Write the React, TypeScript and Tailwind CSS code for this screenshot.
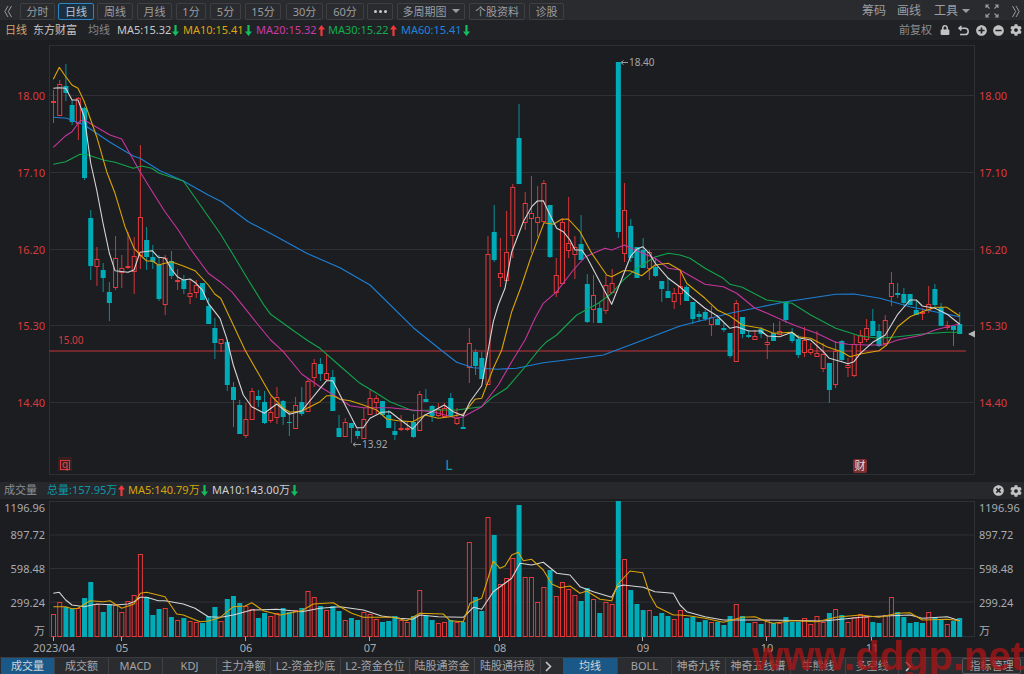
import React from "react";
import { FaCog, FaLock, FaPlusCircle, FaMinusCircle, FaTimesCircle } from "react-icons/fa";

const BG = "#1c1d21";
const RED = "#e5393b";
const CY = "#00abb8";

// kind (1 up/red hollow, 0 down/cyan), body top, body bottom, high, low (page pixels)
const K: number[][] = [
  [1,101,102,90,123],[1,84,115,80,115],[0,86,93,64,101],[0,105,122,100,125],[1,98,123,97,140],[0,108,178,107,180],
  [0,218,266,210,280],[1,259,266,247,286],[0,270,278,263,292],[0,292,303,282,321],[1,258,287,236,290],[1,268,272,255,288],
  [1,266,267,232,269],[1,256,271,237,294],[1,217,255,145,269],[0,240,257,227,270],[0,257,262,245,269],[0,265,299,255,301],
  [1,258,304,255,315],[0,261,276,251,279],[1,280,281,269,290],[0,280,289,275,294],[1,293,296,280,304],[1,285,292,280,298],
  [0,283,300,283,300],[0,306,324,298,324],[0,328,343,318,359],[1,339,343,339,352],[0,342,385,340,391],[0,387,400,382,427],
  [0,405,434,400,434],[1,419,435,403,438],[1,391,419,388,420],[0,396,400,390,407],[0,402,423,391,424],[1,412,420,397,423],
  [1,397,417,387,424],[0,401,417,400,425],[0,422,423,412,436],[1,405,428,397,428],[0,402,414,387,416],[1,381,411,378,412],
  [1,363,377,359,387],[0,364,374,358,381],[1,373,379,354,381],[0,377,411,370,411],[0,428,437,415,437],
  [1,422,436,418,436],[0,423,428,423,443],[0,431,436,428,439],[1,419,438,408,438],[1,398,414,390,414],[1,398,402,395,414],
  [0,401,415,401,415],[0,415,428,410,428],[0,431,435,422,440],[1,428,429,415,431],[1,428,429,422,431],[0,422,437,414,438],
  [1,394,430,391,430],[0,399,402,389,402],[0,406,416,405,422],[1,409,415,403,417],[1,408,416,403,418],[0,398,416,393,416],
  [1,418,423,408,425],[0,427,429,415,429],[1,343,367,328,383],[0,352,366,349,375],[0,358,379,352,379],[1,254,384,236,385],
  [0,232,260,205,262],[1,273,277,238,287],[1,252,280,211,280],[1,187,235,184,258],[0,138,184,104,184],[1,203,222,192,230],
  [1,213,218,176,253],[1,217,222,186,237],[1,183,221,180,221],[0,205,257,205,258],[1,275,292,258,297],[1,222,283,218,283],
  [1,243,250,197,258],[1,247,254,236,279],[0,244,260,215,260],[0,284,322,274,323],[1,295,309,275,323],[0,308,323,302,323],
  [1,285,310,275,314],[1,283,292,269,292],[0,62,232,62,238],[1,210,253,183,262],[0,226,258,219,262],[0,247,278,247,278],
  [0,250,268,238,268],[1,252,268,250,280],[0,267,276,258,277],[0,281,289,281,302],[0,291,298,278,298],[1,293,301,288,309],
  [1,286,293,270,305],[0,287,301,285,301],[0,302,319,302,324],[0,314,317,311,322],[0,312,319,310,321],[1,317,324,306,336],
  [0,319,325,315,325],[0,328,330,323,332],[0,333,356,333,358],[1,303,361,300,361],[0,317,334,317,338],[0,335,337,330,338],
  [1,336,339,330,339],[0,329,334,327,338],[1,342,344,335,359],[0,333,341,323,341],[1,331,334,321,334],[0,302,320,301,323],
  [0,333,341,328,343],[0,339,355,335,358],[1,340,352,327,357],[1,349,352,343,355],[1,353,356,331,356],[1,354,368,343,372],
  [0,363,390,363,403],[1,351,384,341,388],[0,341,360,340,362],[1,365,367,358,377],[1,344,375,335,377],[1,335,342,330,355],
  [1,328,339,319,342],[0,321,336,309,336],[0,331,346,324,347],[1,320,343,315,343],[1,283,296,272,306],[0,293,295,283,298],
  [0,294,303,288,306],[0,294,305,294,305],[0,310,315,300,315],[1,312,313,308,320],[1,304,310,286,313],[0,289,305,284,307],
  [0,307,326,303,326],[1,325,327,321,330],[0,326,330,326,346],[0,324,334,312,334],
];

// top of each volume bar, in zoom units (page y = 480 + v / 3)
const VT = [403,367,380,387,385,355,307,372,397,372,376,395,364,344,223,352,405,387,385,410,420,415,423,427,428,408,381,423,357,347,368,378,388,415,400,408,400,385,395,390,384,334,352,378,390,378,393,
  420,415,420,397,403,417,426,423,408,420,427,408,331,408,420,430,427,420,425,427,187,350,392,110,165,313,295,235,75,292,292,367,320,270,348,305,327,345,362,323,357,400,365,372,62,238,330,373,390,390,408,400,407,418,390,
  415,412,426,420,425,425,434,408,371,408,428,427,432,420,428,428,410,425,425,415,432,408,425,400,387,405,425,410,403,410,427,428,405,352,395,410,428,426,428,397,410,420,432,423,413];
const VK = [1,1,0,0,1,0,0,1,0,0,1,1,1,1,1,0,0,0,1,0,1,0,1,1,0,0,0,1,0,0,0,1,1,0,0,1,1,0,0,1,0,1,1,0,1,0,0,
  1,0,0,1,1,1,0,0,0,1,1,0,1,0,0,1,1,0,1,0,1,0,0,1,0,1,1,1,0,1,1,1,1,0,1,1,1,1,0,0,1,0,1,1,0,1,0,0,0,1,0,0,0,1,1,
  0,0,0,0,1,0,0,0,1,0,0,1,0,1,0,1,0,0,0,1,1,1,1,0,1,0,1,1,1,1,0,0,1,1,0,0,0,0,0,1,0,0,1,0,0];

const pts = (a: number[]) => {
  const out: string[] = [];
  for (let i = 0; i < a.length; i += 2) out.push(a[i] + "," + a[i + 1]);
  return out.join(" ");
};

const MA5 = [53.3,88.3,59.3,87.7,65.7,88.3,72,100,78,100,84.3,116.7,90.7,163,96.7,190,103,223,109.3,253,115,270.7,128,272.3,134,270,140,252.3,152.3,250.7,158.3,257.3,165,258,171.3,269,177.3,276.7,183.3,280,190,279,196,283.3,202.3,290,208.3,303.3,220,318.3,226.7,338.3,233.3,365,243.3,395,251.7,406.7,264.3,413.3,276.7,404,289.3,414.3,301.7,411,320,388.3,326.7,380.7,332.7,380.7,340,395,356.7,427.7,363.3,427.7,370,418.3,381.7,412.3,390,411.7,398.3,418.3,412.7,429,425,415,431.7,411.7,444.3,405,453.3,411.7,463.3,415.7,470,401.7,481.7,385.7,493.3,321.7,498.3,305,505,288.3,511.7,252,523.3,221.7,531.7,206.7,537.3,201,543.3,200.7,550,215,556.7,228.3,563.3,231.7,570,240,575,250,581.7,250,586.7,257,611.7,304.3,623.3,275,630.7,256,636.7,249.3,642.7,246.7,649.3,253.3,655,263,668.3,278.3,680,287,692.7,298.3,705,308.3,717.3,316,730,328.3,736.7,326.7,748.7,331,761,331,767.3,336,779.7,336.7,792,332.3,798.3,337.7,810.7,340,823.3,351.7,829.3,358.3,841.7,361.7,848,363.7,854,361.7,860.3,353.3,872.7,342.3,885.3,335,897.7,314.3,910,300,916.3,300,922.3,306,935,308.3,947.3,314.3,959.7,324.3];
const MA10 = [53.3,79.3,59.3,67.3,65.7,76.7,72,85,78,88.3,84.3,101.7,96.7,136.7,106.7,171.7,115,193.3,125,226.7,134,248.3,140.3,255,146.7,261,152.7,261,158.3,265,165,263.3,171.3,261.7,183.3,266,195,270.7,208.3,285,215,294.3,220.7,298.3,233.3,325,245,350,258.3,373.3,270.7,395,283.3,408.3,290,412.3,301.7,411,320,401.7,326.7,395.7,333.3,395.7,340,399.3,350,400.7,363.3,405,376.7,410,386.7,419,398.3,420.7,412.7,421.7,425,415,438.3,418.3,450,416.7,463.3,414,475,399.3,481.7,398.3,493.3,368.3,501.7,350,511.7,311.7,521.7,285,530,260,544,222.7,553.3,224.3,561.7,219.3,568.3,219,580,231.7,591.7,253.3,606.7,275,611.7,276.7,623.3,270.7,630,270.7,641.7,275.7,655,265,668.3,263.3,680,270,686.7,283.3,705,298.3,717.3,310,730,316,742.3,325,761,328.3,773.3,333.3,792,332.3,798.3,336.7,810.7,338.3,826.7,346.7,841.7,351.7,850,356.7,860,354,879,350.7,886.7,345,897.7,326.7,910,316.7,922.3,311.7,935,307.3,946.7,307.3,959.7,316];
const MA20 = [53.3,147.3,65.7,135.7,72,131.7,80,121,84.3,120,96.7,127.3,110,135,121.7,139,140,171.7,153.3,193.3,165,211.7,178.3,230,190,248.3,208.3,273.3,220,281.7,231.7,291.7,245,308.3,258.3,325,270.7,340,283.3,351.7,301.7,374,320,386.7,340,399,350,405.7,363.3,407.7,376.7,407.7,390,407.7,412.7,410,433.3,411.7,456.7,418.3,463.3,416.7,481.7,406.7,498.3,385,511.7,361.7,525,340,535,318.3,543.3,303.3,556.7,291.7,573.3,270,585,257,593.3,253.3,605,248.3,611.7,250,624.3,245,635,250,655,258.3,668.3,268.3,680,270,705,284.3,723.3,286.7,736.7,293.3,755,308.3,767.3,313.3,786,321.7,798.3,326.7,816.7,333.3,835.7,342.3,848,344.3,866.7,345,883.3,345,897.7,340,922.3,335,935,330,947.3,326.7,959.7,324];
const MA30 = [53.3,164.3,65.7,161.7,80,154.3,88.3,155,103.3,160,115,162.3,133.3,168.3,141.7,166,151.7,168.3,159.3,173.3,183.3,181,196.7,200,220,233.3,233.3,255,248.3,280,264.3,305.7,270.7,314.3,295,331.7,308.3,341,320,348.3,340,366,360,383.3,376.7,393.3,390,401.7,412.7,410.7,433.3,410,456.7,410,481.7,406.7,493.3,396.7,506.7,388.3,526.7,365,540,348.3,546.7,341.7,556.7,335,576.7,315,598.3,303.3,611.7,293.3,623.3,280,636.7,268.3,655,257,668.3,253.3,680,255,690,258.3,705,268.3,723.3,278.3,730,284.3,742.3,287.3,766.7,300,792,303.3,810.7,315,835.7,328.3,860,336,879,338.3,897.7,336.7,922.3,334,947.3,332.3,959.7,332.3];
const MA60 = [53.3,117.3,66.7,118.3,84.3,125,110,142.3,133.3,156,140,158.3,160,170.7,183.3,181,208.3,195,221.7,201.7,248.3,221.7,276.7,236.7,306.7,253.3,340,267.7,370,285,413.3,327.7,440,349.3,456.7,362.3,473.3,367.7,496.7,369.3,516.7,368.3,543.3,362.7,580,358.3,603.3,355,616.7,350,643.3,340,680,326,730,313.3,786,301.7,835.7,294.3,854,294,880,298.3,910,306.7,959.7,316.7];

// volume averages: zoom coordinates per crop
const zoomPts = (off: number, a: number[]) => {
  const out: number[] = [];
  for (let i = 0; i < a.length; i += 2) out.push(+(off + a[i] / 3).toFixed(1), +(480 + a[i + 1] / 3).toFixed(1));
  return out;
};
const VW = [...zoomPts(0,[160,340,178,337,197,360,216,375,253,380,290,372,345,375,384,372,402,365,421,352,440,352,475,362,495,362,550,372,585,385,625,410,662,412,700,405,755,390,830,388,905,395,960,385,1020,380]),
  ...zoomPts(340,[70,390,125,408,180,415,218,418,240,405,295,410,370,412,400,382,425,388,460,335,515,295,540,250,575,255,610,247,650,280,690,285,720,320,760,335,815,352,832,320,850,315,910,322,945,335,1000,340,1020,375]),
  ...zoomPts(680,[20,395,75,410,130,420,262,420,430,423,560,410,690,405,727,415,802,410,839,422])];
const VY = [...zoomPts(0,[160,380,197,380,216,386,234,385,270,362,310,365,330,362,365,385,402,372,421,340,440,337,495,350,530,402,550,405,600,425,625,423,660,413,700,380,735,378,755,368,790,392,840,405,905,392,940,372,1000,368,1020,380]),
  ...zoomPts(340,[35,400,70,412,160,412,200,422,240,400,310,402,330,422,370,425,390,370,425,355,460,243,480,265,495,258,515,225,535,217,550,242,575,238,610,270,635,312,660,323,690,318,720,340,740,333,780,358,815,362,832,315,870,273,908,278,930,345,950,380,1000,405,1020,405]),
  ...zoomPts(680,[30,408,75,415,130,427,187,412,225,410,262,425,280,430,336,422,411,425,467,412,541,405,597,412,653,400,690,398,727,420,802,418,839,422])];

const cx = (i: number) => +(53.5 + 6.207 * i).toFixed(2);

const Up = () => (<svg width="7" height="11" viewBox="0 0 7 11" className="shrink-0"><path d="M3.5 0 L7 4.5 H4.6 V11 H2.4 V4.5 H0 Z" fill="#f03a3a" /></svg>);
const Down = () => (<svg width="7" height="11" viewBox="0 0 7 11" className="shrink-0"><path d="M3.5 11 L7 6.5 H4.6 V0 H2.4 V6.5 H0 Z" fill="#12c060" /></svg>);

const BTNS: [string, string, boolean?][] = [
  ["分时", "w-[35px] ml-[8px]"],
  ["日线", "w-[36px] ml-[3px]", true],
  ["周线", "w-[36px] ml-[3px]"],
  ["月线", "w-[35px] ml-[4px]"],
  ["1分", "w-[30px] ml-[4px]"],
  ["5分", "w-[31px] ml-[4px]"],
  ["15分", "w-[36px] ml-[4px]"],
  ["30分", "w-[37px] ml-[5px]"],
  ["60分", "w-[38px] ml-[3px]"],
];

const Btn = ({ label, cls, active }: { label: React.ReactNode; cls: string; active?: boolean }) => (
  <div className={`${cls} h-[17px] flex items-center justify-center border rounded-[2px] leading-none ${active ? "border-[#2a86c4] bg-[#1d2f3f] text-[#b9c4cc]" : "border-[#3d3f43] text-[#9b9da1]"}`}>{label}</div>
);

const MA = ({ t, c, up, w }: { t: string; c: string; up?: boolean; w: string }) => (
  <div className={`flex items-center gap-[1px] whitespace-nowrap ${w} ${c}`}><span>{t}</span>{up ? <Up /> : <Down />}</div>
);

const TABS_L = ["成交量", "成交额", "MACD", "KDJ", "主力净额"];
const TABS_R = ["BOLL", "神奇九转"];

const Tab = ({ t, w, active }: { t: string; w: string; active?: boolean }) => (
  <div className={`${w} h-full flex items-center justify-center whitespace-nowrap border-r border-[#3f4145] ${active ? "bg-[#1a5887] text-[#cfd6dc]" : "text-[#a3a5a8]"}`}>{t}</div>
);

const Y_PRICE: [string, number][] = [["18.00", 95.5], ["17.10", 172.5], ["16.20", 249.5], ["15.30", 325.5], ["14.40", 402.5]];
const Y_VOL: [string, number][] = [["1196.96", 508], ["897.72", 535], ["598.48", 569], ["299.24", 603], ["万", 631]];
const X_TICKS: [string, number][] = [["2023/04", 54], ["05", 122], ["06", 246], ["07", 370], ["08", 500], ["09", 643], ["10", 767], ["11", 872]];

export default function App() {
  return (
    <div className="relative w-[1024px] h-[674px] overflow-hidden flex flex-col bg-[#1c1d21] text-[11px] font-['Noto_Sans','Noto_Sans_CJK_SC',sans-serif]">
      {/* toolbar */}
      <div className="h-[20px] shrink-0 flex items-center bg-[#292b2f] pl-[4px] pt-[2px]">
        <svg width="8" height="13" viewBox="0 0 8 13" fill="none" stroke="#9b9da1" strokeWidth="1"><path d="M4 1 L0.8 6.5 L4 12 M7.5 1 L4.3 6.5 L7.5 12" /></svg>
        {BTNS.map(([l, c, a]) => <Btn key={l} label={l} cls={c} active={a} />)}
        <Btn cls="w-[26px] ml-[3px]" label={<span className="flex gap-[2px]"><i className="w-[3px] h-[3px] rounded-full bg-[#c8c8c8]" /><i className="w-[3px] h-[3px] rounded-full bg-[#c8c8c8]" /><i className="w-[3px] h-[3px] rounded-full bg-[#c8c8c8]" /></span>} />
        <Btn cls="w-[68px] ml-[4px]" label={<span className="flex items-center gap-[5px]">多周期图<i className="w-0 h-0 border-x-[4px] border-x-transparent border-t-[4px] border-t-[#9b9da1]" /></span>} />
        <Btn cls="w-[56px] ml-[4px]" label="个股资料" />
        <Btn cls="w-[35px] ml-[4px]" label="诊股" />
        <div className="ml-auto flex items-center text-[#9b9da1] text-[12px] pr-[4px]">
          <span>筹码</span>
          <span className="ml-[11px]">画线</span>
          <span className="ml-[13px]">工具</span>
          <i className="ml-[4px] w-0 h-0 border-x-[4px] border-x-transparent border-t-[4px] border-t-[#9b9da1]" />
          <svg className="ml-[15px]" width="14" height="14" viewBox="0 0 14 14" fill="none" stroke="#9b9da1" strokeWidth="1.1">
            <path d="M1 4 V1 H4 M1 1 L4.5 4.5 M10 1 H13 V4 M13 1 L9.5 4.5 M1 10 V13 H4 M1 13 L4.5 9.5 M13 10 V13 H10 M13 13 L9.5 9.5" />
          </svg>
          <svg className="ml-[13px]" width="8" height="13" viewBox="0 0 8 13" fill="none" stroke="#9b9da1" strokeWidth="1"><path d="M0.5 1 L3.7 6.5 L0.5 12 M4 1 L7.2 6.5 L4 12" /></svg>
        </div>
      </div>
      {/* legend */}
      <div className="h-[20px] shrink-0 flex items-center bg-[#202226] pl-[5px]">
        <span className="text-[#d7a56c] w-[28px]">日线</span>
        <span className="text-[#c6c6c6] w-[55px]">东方财富</span>
        <span className="text-[#85878a] w-[29px]">均线</span>
        <MA t="MA5:15.32" c="text-[#c8c8c8]" w="w-[66px]" />
        <MA t="MA10:15.41" c="text-[#dca70a]" w="w-[73px]" />
        <MA t="MA20:15.32" c="text-[#cb3aa8]" up w="w-[72px]" />
        <MA t="MA30:15.22" c="text-[#12ad4f]" up w="w-[73px]" />
        <MA t="MA60:15.41" c="text-[#1c86da]" w="w-[70px]" />
        <div className="ml-auto flex items-center text-[#8c8e92] pr-[2px]">
          <span className="mr-[8px]">前复权</span>
          <FaLock size={10} color="#c2c2c2" />
          <svg className="ml-[8px]" width="11" height="11" viewBox="0 0 11 11" fill="none" stroke="#c2c2c2" strokeWidth="1.5"><path d="M3.4 1 L1 3.2 L3.4 5.4 M1.4 3.2 H7 A3.2 3.2 0 0 1 7 9.6 H2" /></svg>
          <FaPlusCircle className="ml-[7px]" size={11} color="#c2c2c2" />
          <FaMinusCircle className="ml-[6px]" size={11} color="#c2c2c2" />
          <FaCog className="ml-[6px]" size={12} color="#c2c2c2" />
        </div>
      </div>
      {/* price chart */}
      <svg width="1024" height="442" viewBox="0 40 1024 442" className="shrink-0 block">
        <g stroke="#2e3034" strokeWidth="1">
          <path d="M49 45.5 H974 M49.5 45 V474.5 M974.5 45 V474.5 M49 474.5 H974" />
          {Y_PRICE.map(([, y]) => <path key={y} d={`M50 ${y} H974`} />)}
        </g>
        <path d="M49 351 H966" stroke="#8c2e30" strokeWidth="1.4" />
        {K.map(([u, t, b, h, l], i) => {
          const x = cx(i);
          return u ? (
            <g key={i} stroke={RED} fill={BG}>
              <path d={`M${x} ${h} V${t} M${x} ${b} V${l}`} strokeOpacity=".9" />
              <rect x={x - 2} y={t + 0.5} width={4} height={Math.max(b - t, 1)} />
            </g>
          ) : (
            <g key={i}>
              <path d={`M${x} ${h} V${l}`} stroke="#0b8f9a" />
              <rect x={x - 2.5} y={t} width={5} height={Math.max(b - t, 1)} fill={CY} />
            </g>
          );
        })}
        <g fill="none" strokeWidth="1.1" strokeLinejoin="round">
          <polyline points={pts(MA60)} stroke="#1c80d6" />
          <polyline points={pts(MA30)} stroke="#12a54c" />
          <polyline points={pts(MA20)} stroke="#c8359f" />
          <polyline points={pts(MA10)} stroke="#d9a406" />
          <polyline points={pts(MA5)} stroke="#d6d6d6" />
        </g>
        <g fontSize="11" fill="#d93a3c">
          {Y_PRICE.map(([t, y]) => <text key={t} x="45" y={y + 4} textAnchor="end">{t}</text>)}
          {Y_PRICE.map(([t, y]) => <text key={t} x="979" y={y + 4}>{t}</text>)}
          <text x="58" y="344" fontSize="10">15.00</text>
        </g>
        <g fontSize="10" fill="#a6a6a6">
          <text x="629" y="66">18.40</text>
          <text x="362" y="448">13.92</text>
        </g>
        <path d="M621 62.5 H628 M353 444.5 H361 M353 444.5 L355.5 442.5 M353 444.5 L355.5 446.5 M621 62.5 L623.5 60.5 M621 62.5 L623.5 64.5" stroke="#9a9a9a" fill="none" />
        <path d="M968 334 L975 330.5 V337.5 Z" fill="#b6b6b6" />
        <rect x="58" y="457" width="14" height="14" fill="#3a1e20" />
        <rect x="60.5" y="460.5" width="9" height="9" fill="none" stroke="#d93a3c" />
        <text x="65" y="468" fontSize="10" textAnchor="middle" fill="#e24a4c">q</text>
        <text x="449" y="470" fontSize="14" textAnchor="middle" fill="#0aa0ac">L</text>
        <rect x="853" y="459" width="14" height="14" rx="2" fill="#7d2e30" />
        <text x="860" y="470" fontSize="11" textAnchor="middle" fill="#e8dcdc">财</text>
      </svg>
      {/* volume legend */}
      <div className="h-[17px] shrink-0 flex items-center whitespace-nowrap bg-[#26282c] pl-[4px]">
        <span className="text-[#8e9094] w-[43px]">成交量</span>
        <div className="flex items-center gap-[1px] w-[81px] text-[#0b9aa6]"><span>总量:157.95万</span><Up /></div>
        <div className="flex items-center gap-[1px] w-[84px] text-[#d9a406]"><span>MA5:140.79万</span><Down /></div>
        <div className="flex items-center gap-[1px] text-[#cfcfcf]"><span>MA10:143.00万</span><Down /></div>
        <div className="ml-auto flex items-center pr-[2px]">
          <FaTimesCircle size={11} color="#c2c2c2" />
          <FaCog className="ml-[6px]" size={12} color="#c2c2c2" />
        </div>
      </div>
      {/* volume chart */}
      <svg width="1024" height="158" viewBox="0 499 1024 158" className="shrink-0 block">
        <g stroke="#2e3034">
          <path d="M49 501.5 H974 M49.5 501 V637 M974.5 501 V637 M49 636.5 H974" />
          {[535, 568.5, 602].map((y) => <path key={y} d={`M50 ${y} H974`} />)}
        </g>
        {VT.map((z, i) => {
          const x = cx(i);
          const t = Math.round(480 + z / 3);
          return VK[i] ? (
            <rect key={i} x={x - 2} y={t + 0.5} width={4} height={636.5 - t - 0.5} fill={BG} stroke={RED} />
          ) : (
            <rect key={i} x={x - 2.5} y={t} width={5} height={637 - t} fill={CY} />
          );
        })}
        <g fill="none" strokeWidth="1.1" strokeLinejoin="round">
          <polyline points={pts(VW)} stroke="#d6d6d6" />
          <polyline points={pts(VY)} stroke="#d9a406" />
        </g>
        <g fontSize="11" fill="#a9abae">
          {Y_VOL.map(([t, y]) => <text key={t} x="45" y={y + 4} textAnchor="end">{t}</text>)}
          {Y_VOL.map(([t, y]) => <text key={t} x="979" y={y + 4}>{t}</text>)}
          {X_TICKS.map(([t, x]) => <text key={t} x={x} y="652" textAnchor="middle">{t}</text>)}
        </g>
        <g stroke="#a9abae">
          {X_TICKS.map(([t, x]) => <path key={t} d={`M${x - 0.5} 637 V641`} />)}
        </g>
      </svg>
      {/* tabs */}
      <div className="h-[17px] shrink-0 flex items-center bg-[#2a2c30] border-t border-[#3a3c40]">
        <div className="ml-[1px] h-full flex">
          {TABS_L.map((t, i) => <Tab key={t} t={t} w="w-[54px]" active={i === 0} />)}
          <Tab t="L2-资金抄底" w="w-[70px]" />
          <Tab t="L2-资金仓位" w="w-[69px]" />
          <Tab t="陆股通资金" w="w-[65px]" />
          <Tab t="陆股通持股" w="w-[66px]" />
        </div>
        <svg className="ml-[4px]" width="7" height="11" viewBox="0 0 7 11" fill="none" stroke="#c8c8c8" strokeWidth="1.6"><path d="M1 1 L5.5 5.5 L1 10" /></svg>
        <div className="ml-[11px] h-full flex">
          <Tab t="均线" w="w-[55px]" active />
          {TABS_R.map((t) => <Tab key={t} t={t} w="w-[54px]" />)}
          <Tab t="神奇五线谱" w="w-[65px]" />
          <Tab t="牛熊线" w="w-[55px]" />
          <Tab t="多空线" w="w-[53px]" />
        </div>
        <svg className="ml-[6px]" width="7" height="11" viewBox="0 0 7 11" fill="none" stroke="#c8c8c8" strokeWidth="1.6"><path d="M1 1 L5.5 5.5 L1 10" /></svg>
        <div className="ml-[50px] w-[59px] h-[16px] flex items-center justify-center border border-[#55575a] rounded-[2px] text-[#a3a5a8]">指标管理</div>
      </div>
      {/* watermark */}
      <div className="absolute left-[752px] top-[633px] text-[40px] leading-[46px] font-bold whitespace-nowrap text-[#aa1414] opacity-75 font-['Liberation_Sans',sans-serif]">www.ddgp.net</div>
    </div>
  );
}
